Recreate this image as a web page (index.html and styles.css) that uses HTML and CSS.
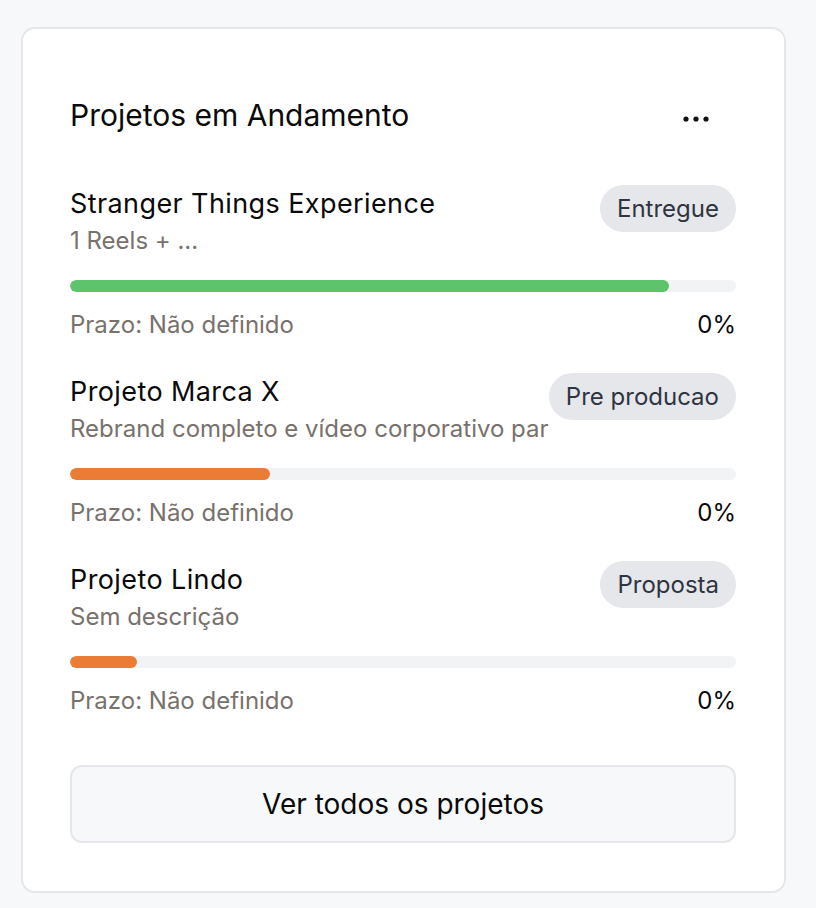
FILE: index.html
```html
<!DOCTYPE html>
<html lang="pt">
<head>
<meta charset="utf-8">
<link rel="stylesheet" href="styles.css">
</head>
<body>
<div class="card">
  <div class="header">
    <h2 class="title">Projetos em Andamento</h2>
    <button class="more" aria-label="Mais opções">
      <svg width="26" height="6" viewBox="0 0 26 6"><circle cx="3" cy="3" r="2.6"/><circle cx="13" cy="3" r="2.6"/><circle cx="23" cy="3" r="2.6"/></svg>
    </button>
  </div>
  <div class="list">
    <div class="project">
      <div class="top">
        <div class="info">
          <div class="name">Stranger Things Experience</div>
          <div class="desc">1 Reels + ...</div>
        </div>
        <span class="badge">Entregue</span>
      </div>
      <div class="track"><div class="fill green" style="width:90%"></div></div>
      <div class="meta"><span class="due">Prazo: Não definido</span><span class="pct">0%</span></div>
    </div>
    <div class="project">
      <div class="top">
        <div class="info">
          <div class="name">Projeto Marca X</div>
          <div class="desc">Rebrand completo e vídeo corporativo par</div>
        </div>
        <span class="badge">Pre producao</span>
      </div>
      <div class="track"><div class="fill orange" style="width:30%"></div></div>
      <div class="meta"><span class="due">Prazo: Não definido</span><span class="pct">0%</span></div>
    </div>
    <div class="project">
      <div class="top">
        <div class="info">
          <div class="name">Projeto Lindo</div>
          <div class="desc">Sem descrição</div>
        </div>
        <span class="badge">Proposta</span>
      </div>
      <div class="track"><div class="fill orange" style="width:10%"></div></div>
      <div class="meta"><span class="due">Prazo: Não definido</span><span class="pct">0%</span></div>
    </div>
  </div>
  <button class="all">Ver todos os projetos</button>
</div>
</body>
</html>
```
FILE: styles.css
```css
* { box-sizing: border-box; }
html, body { margin: 0; padding: 0; }
body {
  background: #f7f8fa;
  font-family: Inter, "Noto Sans", sans-serif;
  color: #0a0a0a;
  padding: 27px 31px 16px 21px;
}
.card {
  background: #fff;
  border: 2px solid #e6e7eb;
  border-radius: 14px;
  padding: 68px 48px 48px 47px;
  width: 765px;
}
.header {
  display: flex;
  justify-content: space-between;
  align-items: center;
  height: 36px;
}
.title {
  margin: 0;
  font-size: 30px;
  font-weight: 400;
}
.more {
  border: 0;
  background: none;
  padding: 0;
  margin-right: 27px;
  margin-top: 8px;
  display: flex;
}
.more svg { fill: #111; }
.list {
  margin-top: 52px;
  display: flex;
  flex-direction: column;
  gap: 32px;
}
.project { display: flex; flex-direction: column; }
.top {
  display: flex;
  justify-content: space-between;
  align-items: flex-start;
}
.name {
  font-size: 27px;
  letter-spacing: 0.4px;
  line-height: 36px;
  margin-top: 1px;
}
.desc {
  font-size: 24px;
  line-height: 32px;
  color: #78716c;
  margin-top: 3px;
}
.badge {
  background: #e6e7eb;
  color: #2f3441;
  font-size: 24px;
  line-height: 47px;
  height: 47px;
  padding: 0 17px;
  border-radius: 24px;
  white-space: nowrap;
}
.track {
  margin-top: 23px;
  height: 12px;
  background: #f2f3f5;
  border-radius: 6px;
  overflow: hidden;
}
.fill { height: 100%; border-radius: 6px; }
.green { background: #5ec46c; }
.orange { background: #ea7c36; }
.meta {
  display: flex;
  justify-content: space-between;
  margin-top: 17px;
  font-size: 24px;
  line-height: 32px;
}
.due { color: #78716c; }
.pct { color: #0a0a0a; }
.all {
  margin-top: 48px;
  width: 100%;
  height: 78px;
  background: #f7f8fa;
  border: 2px solid #e6e7eb;
  border-radius: 12px;
  font-family: inherit;
  font-size: 28px;
  color: #0a0a0a;
  cursor: pointer;
}
```
